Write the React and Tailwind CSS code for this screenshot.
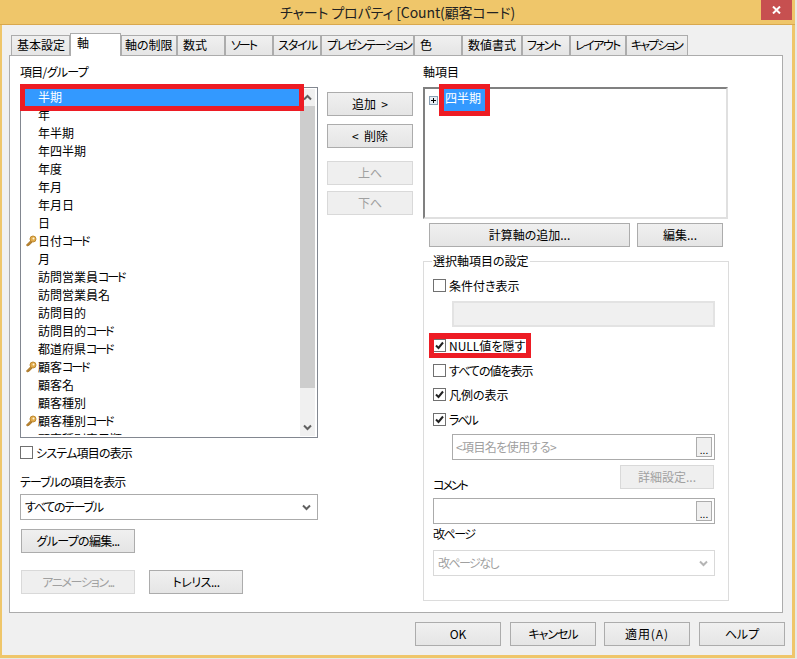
const ITEMS = [
  { name: "年" },
  { name: "年半期" },
  { name: "年四半期" },
  { name: "年度" },
  { name: "年月" },
  { name: "年月日" },
  { name: "日" },
  { name: "日付", code: true, key: true },
  { name: "月" },
  { name: "訪問営業員", code: true },
  { name: "訪問営業員名" },
  { name: "訪問目的" },
  { name: "訪問目的", code: true },
  { name: "都道府県", code: true },
  { name: "顧客", code: true, key: true },
  { name: "顧客名" },
  { name: "顧客種別" },
  { name: "顧客種別", code: true, key: true },
  { name: "顧客種別表示順" },
];

const TABS = [
  { label: "基本設定", w: "w-[59px]" },
  { label: "軸", w: "w-[51px]", active: true },
  { label: "軸の制限", w: "w-[56px]", pl: "pl-[3px]" },
  { label: "数式", w: "w-[48px]" },
  { label: "ソート", w: "w-[48px]", fit: "tracking-[-2px]" },
  { label: "スタイル", w: "w-[48px]", pl: "pl-[4px]", fit: "tracking-[-1px]" },
  { label: "プレゼンテーション", w: "w-[93px]", fit: "tracking-[-1.4px]" },
  { label: "色", w: "w-[48px]" },
  { label: "数値書式", w: "w-[60px]" },
  { label: "フォント", w: "w-[48px]", pl: "pl-[4px]", fit: "tracking-[-1.5px]" },
  { label: "レイアウト", w: "w-[56px]", pl: "pl-[4px]", fit: "tracking-[-1.5px]" },
  { label: "キャプション", w: "w-[62px]", pl: "pl-[4px]", fit: "tracking-[-2px]" },
];

export default function App() {
  return (
    <div className="flex w-[797px] h-[659px] overflow-hidden bg-[#EFC66A] text-black text-[12px] leading-[16px] [font-family:'Noto_Sans_CJK_JP',sans-serif] [font-feature-settings:'palt']">
      <div className="w-[795px] h-[659px] flex flex-col">
        {/* Title bar */}
        <div className="relative h-[25px] shrink-0 border-b border-[#D9A84E] flex items-center justify-center">
          <span className="text-[14px] leading-[24px] tracking-[-0.1px] text-[#222] pb-[1px]">
            チャート プロパティ [Count(顧客コード)
          </span>
          <div className="absolute top-0 right-[3px] w-[31px] h-[20px] bg-[#C75050] flex items-center justify-center">
            <svg width="9" height="8" viewBox="0 0 9 8">
              <path d="M1 0.5 L8 7.5 M8 0.5 L1 7.5" stroke="#fff" strokeWidth="2" />
            </svg>
          </div>
        </div>

        {/* Client area */}
        <div className="mx-[2px] w-[790px] h-[630px] shrink-0 bg-[#F0F0F0] pl-[7px]">
          {/* Tabs */}
          <div className="relative z-10 flex items-end h-[23px] mt-[8px] pl-[2px]">
            {TABS.map((t) => (
              <Tab key={t.label} {...t} />
            ))}
          </div>

          {/* Tab panel */}
          <div className="flex w-[774px] h-[558px] mt-[-1px] border border-[#ACACAC] bg-white pl-[10px]">
            <LeftColumn />
            <MiddleColumn />
            <RightColumn />
          </div>

          {/* Dialog buttons */}
          <div className="flex mt-[9px] ml-[406px]">
            <Btn className="w-[86px] h-[24px] border-[#3399FF]">OK</Btn>
            <Btn className="w-[86px] h-[24px] ml-[9px] tracking-[-1px]">キャンセル</Btn>
            <Btn className="w-[86px] h-[24px] ml-[8px] tracking-[0.9px]">適用(A)</Btn>
            <Btn className="w-[86px] h-[24px] ml-[9px]">ヘルプ</Btn>
          </div>
        </div>
        <div className="mt-auto h-[1px] bg-[#E8E8E4]" />
      </div>
      <div className="w-[2px] h-[659px] bg-[#E8E8E4]" />
    </div>
  );
}

/* ---------------- Columns ---------------- */

function LeftColumn() {
  return (
    <div className="w-[298px] pt-[8px]">
      <div className="tracking-[-0.7px]">項目/グループ</div>

      {/* Field list */}
      <div className="relative flex w-[298px] h-[351px] mt-[7px] border border-[#828790] bg-white">
        <div className="w-[279px] h-[347px] overflow-hidden">
          <div className="flex items-center h-[18px] pl-[17px] bg-[#3399FF] text-white">半期</div>
          {ITEMS.map((item, i) => (
            <div key={i} className="relative flex items-center h-[18px] pl-[17px] whitespace-nowrap">
              {item.key && <KeyIcon />}
              {item.name}
              {item.code && <span className="tracking-[-2.2px]">コード</span>}
            </div>
          ))}
        </div>
        <div className="flex flex-col w-[15px] h-[347px] mt-[1px] bg-[#F0F0F0]">
          <div className="flex items-center justify-center h-[17px]">
            <Chevron up />
          </div>
          <div className="h-[282px] bg-[#CDCDCD]" />
          <div className="flex items-center justify-center h-[17px] mt-auto">
            <Chevron />
          </div>
        </div>
        <div className="absolute left-[-1px] top-[-4px] w-[284px] h-[27px] border-[5px] border-[#ED1C24]" />
      </div>

      <Check className="mt-[8px]" fit="tracking-[-0.8px]" label="システム項目の表示" />

      <div className="mt-[15px] tracking-[-0.9px]">テーブルの項目を表示</div>
      <Select className="w-[298px] mt-[4px]" fit="tracking-[-1.3px]" text="すべてのテーブル" />

      <Btn className="w-[114px] h-[24px] mt-[9px] ml-[1px] tracking-[-0.7px]">グループの編集...</Btn>

      <div className="flex mt-[17px] ml-[1px]">
        <Btn disabled className="w-[114px] h-[24px] tracking-[-1.3px]">アニメーション...</Btn>
        <Btn className="w-[94px] h-[24px] ml-[14px] tracking-[-0.5px]">トレリス...</Btn>
      </div>
    </div>
  );
}

function MiddleColumn() {
  return (
    <div className="flex flex-col w-[86px] ml-[9px] pt-[36px]">
      <Btn className="h-[24px]">追加&nbsp; &gt;</Btn>
      <Btn className="h-[24px] mt-[8px]">&lt;&nbsp; 削除</Btn>
      <Btn disabled className="h-[24px] mt-[13px]">上へ</Btn>
      <Btn disabled className="h-[24px] mt-[6px]">下へ</Btn>
    </div>
  );
}

function RightColumn() {
  return (
    <div className="w-[306px] ml-[10px] pt-[8px]">
      <div>軸項目</div>

      {/* Axis tree */}
      <div className="flex items-start w-[305px] h-[132px] mt-[7px] border-2 border-t-[#808080] border-l-[#808080] border-r-[#E0E0E0] border-b-[#E0E0E0] bg-white">
        <PlusBox />
        <div className="relative w-[41px] h-[22px] ml-[6px] pl-[1px] pt-[1px] bg-[#3399FF] text-white">
          四半期
          <div className="absolute left-[-5px] top-[-5px] w-[51px] h-[32px] border-[5px] border-[#ED1C24]" />
        </div>
      </div>

      <div className="flex mt-[4px] ml-[6px]">
        <Btn className="w-[201px] h-[24px]">計算軸の追加...</Btn>
        <Btn className="w-[86px] h-[24px] ml-[7px]">編集...</Btn>
      </div>

      {/* Selected axis item settings */}
      <div className="relative w-[306px] h-[340px] mt-[14px] border border-[#DCDCDC] pl-[9px] pt-[17px]">
        <div className="absolute left-[8px] top-[-9px] bg-white px-[1px]">選択軸項目の設定</div>

        <Check label="条件付き表示" />
        <div className="w-[263px] h-[26px] mt-[9px] ml-[19px] border-2 border-[#E3E3E3] bg-[#F0F0F0]" />

        <div className="relative mt-[12px]">
          <Check checked label="NULL値を隠す" />
          <div className="absolute left-[-4px] top-[-6px] w-[102px] h-[25px] border-[5px] border-t-[6px] border-[#ED1C24]" />
        </div>
        <Check className="mt-[12px]" fit="tracking-[-1px]" label="すべての値を表示" />
        <Check className="mt-[11px]" checked label="凡例の表示" />
        <Check className="mt-[12px]" checked fit="tracking-[-2px]" label="ラベル" />

        <EllipsisInput className="w-[263px] mt-[8px] ml-[19px]" text="<項目名を使用する>" />

        <div className="flex items-start justify-between w-[281px] h-[33px] mt-[5px]">
          <div className="mt-[12px] tracking-[-2px]">コメント</div>
          <Btn disabled className="w-[94px] h-[24px]">詳細設定...</Btn>
        </div>
        <EllipsisInput className="w-[282px]" />

        <div className="mt-[2px] tracking-[-1.5px]">改ページ</div>
        <Select disabled className="w-[282px] mt-[8px]" fit="tracking-[-1.6px]" text="改ページなし" />
      </div>
    </div>
  );
}

/* ---------------- Small UI parts ---------------- */

function Tab({ label, w, pl = "pl-[5px]", fit = "", active }) {
  if (active) {
    return (
      <div className={`${w} h-[23px] pl-[6px] pt-[1px] border border-b-0 border-[#ACACAC] bg-white`}>
        {label}
      </div>
    );
  }
  return (
    <div className={`${w} ${pl} ${fit} h-[20px] mb-[1px] pt-[1px] border border-b-0 border-[#ACACAC] bg-gradient-to-b from-[#F0F0F0] to-[#E5E5E5] whitespace-nowrap overflow-hidden`}>
      {label}
    </div>
  );
}

function Btn({ className = "", disabled, children }) {
  const look = disabled
    ? "border-[#D9D9D9] bg-[#EFEFEF] text-[#A0A0A0]"
    : "border-[#ACACAC] bg-gradient-to-b from-[#F0F0F0] to-[#E5E5E5] text-black";
  return (
    <div className={`flex items-center justify-center shrink-0 border whitespace-nowrap ${look} ${className}`}>
      {children}
    </div>
  );
}

function Check({ className = "", checked, label, fit = "" }) {
  return (
    <div className={`flex items-center h-[13px] whitespace-nowrap ${className}`}>
      <div className="flex items-center justify-center w-[13px] h-[13px] mr-[3px] border border-[#707070] bg-white">
        {checked && (
          <svg width="11" height="11" viewBox="0 0 11 11">
            <path d="M2 5.5 L4.5 8 L9 2.5" fill="none" stroke="#222" strokeWidth="2" />
          </svg>
        )}
      </div>
      <span className={fit}>{label}</span>
    </div>
  );
}

function Select({ className = "", disabled, text, fit = "" }) {
  const look = disabled ? "border-[#D9D9D9] text-[#A0A0A0]" : "border-[#ABABAB] text-black";
  return (
    <div className={`flex items-center justify-between h-[26px] pl-[4px] pr-[6px] border bg-white ${look} ${className}`}>
      <span className={fit}>{text}</span>
      <Chevron muted={disabled} />
    </div>
  );
}

function EllipsisInput({ className = "", text }) {
  return (
    <div className={`flex items-center justify-between h-[26px] pl-[3px] pr-[2px] border border-[#ABABAB] bg-white text-[#A0A0A0] ${className}`}>
      <span className="tracking-[-0.6px]">{text}</span>
      <div className="flex items-end justify-center w-[16px] h-[20px] border border-[#ACACAC] bg-[#F0F0F0] text-black text-[10px] leading-[13px]">
        ...
      </div>
    </div>
  );
}

function Chevron({ up, muted }) {
  return (
    <svg width="9" height="7" viewBox="0 0 9 7">
      <path
        d={up ? "M1 5.5 L4.5 2 L8 5.5" : "M1 1.5 L4.5 5 L8 1.5"}
        fill="none"
        stroke={muted ? "#B5B5B5" : "#606060"}
        strokeWidth="2"
      />
    </svg>
  );
}

function KeyIcon() {
  return (
    <svg className="absolute left-[4px] top-[3px]" width="12" height="12" viewBox="0 0 12 12">
      <path d="M6 5.5 L1.5 10 L2.5 11 L4 10 L5 9.5 L7 7 Z" fill="#B9832C" stroke="#A87424" strokeWidth="1" />
      <circle cx="8" cy="4" r="3" fill="#E2AC4C" stroke="#C08A30" strokeWidth="1" />
      <circle cx="8.5" cy="3.5" r="1" fill="#FFF6DC" />
    </svg>
  );
}

function PlusBox() {
  return (
    <svg className="ml-[4px] mt-[7px] shrink-0" width="9" height="9" viewBox="0 0 9 9">
      <rect x="0.5" y="0.5" width="8" height="8" fill="#E8EEF4" stroke="#8AA0B4" />
      <path d="M2 4.5 H7 M4.5 2 V7" stroke="#000" />
    </svg>
  );
}
